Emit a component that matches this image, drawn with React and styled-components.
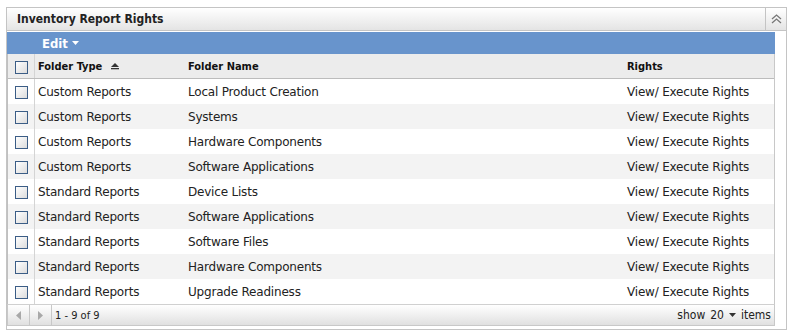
import React from "react";
import styled, { createGlobalStyle } from "styled-components";

const Global = createGlobalStyle`
  body {
    margin: 0;
    background: #fff;
    font-family: "DejaVu Sans", "Liberation Sans", sans-serif;
    color: #000;
  }
`;

const condensed = `"DejaVu Sans Condensed", "DejaVu Sans", sans-serif`;

const Panel = styled.div`
  margin: 7px 0 0 6px;
  width: 779px;
  border: 1px solid #c4c4c4;
  background: #fff;
`;

const TitleBar = styled.div`
  height: 22px;
  display: flex;
  align-items: center;
  border-bottom: 1px solid #c4c4c4;
  background: linear-gradient(#ffffff, #e4e4e4);
`;

const Title = styled.div`
  flex: 1;
  padding-left: 10px;
  font-family: ${condensed};
  font-stretch: condensed;
  font-weight: bold;
  font-size: 12px;
  color: #222;
`;

const CollapseBtn = styled.div`
  width: 20px;
  height: 22px;
  border-left: 1px solid #c4c4c4;
  display: flex;
  align-items: center;
  justify-content: center;
`;

const Body = styled.div`
  padding: 0 11px 3px 0;
`;

const Toolbar = styled.div`
  margin-top: 1px;
  height: 22px;
  background: #6894cc;
  display: flex;
  align-items: center;
  padding-left: 35px;
`;

const EditBtn = styled.div`
  color: #fff;
  font-family: ${condensed};
  font-stretch: condensed;
  font-weight: bold;
  font-size: 13px;
  display: flex;
  align-items: center;
  gap: 4px;
`;

const Table = styled.div`
  border-left: 1px solid #c0c0c0;
  border-right: 1px solid #c8c8c8;
`;

const Row = styled.div`
  display: grid;
  grid-template-columns: 27px 150px 439px 1fr;
  height: ${({ $head }) => ($head ? "24px" : "25px")};
  background: ${({ $head, $alt }) => ($head ? "#ececec" : $alt ? "#f3f3f3" : "#fff")};
  border-bottom: ${({ $head }) => ($head ? "1px solid #bcbcbc" : "none")};
`;

const CheckCell = styled.div`
  border-right: 1px solid #d4d4d4;
  display: flex;
  align-items: center;
  padding-left: 7px;
  padding-top: 2px;
`;

const Box = styled.div`
  width: 11px;
  height: 11px;
  border: 1px solid #3b5d86;
  background: linear-gradient(135deg, #ffffff, #dcdcdc);
`;

const Cell = styled.div`
  display: flex;
  align-items: center;
  gap: 9px;
  padding-left: 3px;
  white-space: nowrap;
  font-size: 12px;
  letter-spacing: -0.2px;
  color: #222;
`;

const HeadCell = styled(Cell)`
  font-family: ${condensed};
  font-stretch: condensed;
  font-weight: bold;
  font-size: 11px;
  letter-spacing: 0;
  color: #111;
`;

const Footer = styled.div`
  height: 20px;
  display: flex;
  align-items: center;
  border: 1px solid #c8c8c8;
  border-top-color: #d0d0d0;
  background: linear-gradient(#ffffff, #e0e0e0);
  font-family: ${condensed};
  font-stretch: condensed;
  font-size: 11px;
  color: #222;
`;

const NavBtn = styled.div`
  width: 21px;
  height: 20px;
  border-right: 1px solid #c8c8c8;
  display: flex;
  align-items: center;
  justify-content: center;
`;

const Range = styled.div`
  flex: 1;
  padding-left: 3px;
`;

const PageSize = styled.div`
  display: flex;
  align-items: center;
  gap: 5px;
  padding-right: 3px;
  font-size: 12px;
`;

const Caret = ({ color = "#fff" }) => (
  <svg width="7" height="4" viewBox="0 0 7 4">
    <path d="M0 0h7L3.5 4z" fill={color} />
  </svg>
);

const SortIcon = () => (
  <svg width="8" height="7" viewBox="0 0 8 7">
    <path d="M0 4L4 0l4 4z" fill="#333" />
    <rect x="0" y="5" width="8" height="1.3" fill="#333" />
  </svg>
);

const Collapse = () => (
  <svg width="11" height="10" viewBox="0 0 11 10">
    <path d="M1 5L5.5 1 10 5M1 9L5.5 5 10 9" stroke="#777" strokeWidth="1.3" fill="none" />
  </svg>
);

const Arrow = ({ dir }) => (
  <svg width="5" height="9" viewBox="0 0 5 9">
    <path d={dir === "left" ? "M5 0v9L0 4.5z" : "M0 0v9l5-4.5z"} fill="#a8a8a8" />
  </svg>
);

const rows = [
  ["Custom Reports", "Local Product Creation"],
  ["Custom Reports", "Systems"],
  ["Custom Reports", "Hardware Components"],
  ["Custom Reports", "Software Applications"],
  ["Standard Reports", "Device Lists"],
  ["Standard Reports", "Software Applications"],
  ["Standard Reports", "Software Files"],
  ["Standard Reports", "Hardware Components"],
  ["Standard Reports", "Upgrade Readiness"],
];

export default function App() {
  return (
    <>
      <Global />
      <Panel>
        <TitleBar>
          <Title>Inventory Report Rights</Title>
          <CollapseBtn>
            <Collapse />
          </CollapseBtn>
        </TitleBar>
        <Body>
          <Toolbar>
            <EditBtn>
              Edit <Caret />
            </EditBtn>
          </Toolbar>
          <Table>
            <Row $head>
              <CheckCell>
                <Box />
              </CheckCell>
              <HeadCell>
                Folder Type <SortIcon />
              </HeadCell>
              <HeadCell>Folder Name</HeadCell>
              <HeadCell>Rights</HeadCell>
            </Row>
            {rows.map(([type, name], i) => (
              <Row key={i} $alt={i % 2 === 1}>
                <CheckCell>
                  <Box />
                </CheckCell>
                <Cell>{type}</Cell>
                <Cell>{name}</Cell>
                <Cell>View/ Execute Rights</Cell>
              </Row>
            ))}
          </Table>
          <Footer>
            <NavBtn>
              <Arrow dir="left" />
            </NavBtn>
            <NavBtn>
              <Arrow dir="right" />
            </NavBtn>
            <Range>1 - 9 of 9</Range>
            <PageSize>
              show <span>20</span>
              <Caret color="#333" /> items
            </PageSize>
          </Footer>
        </Body>
      </Panel>
    </>
  );
}
